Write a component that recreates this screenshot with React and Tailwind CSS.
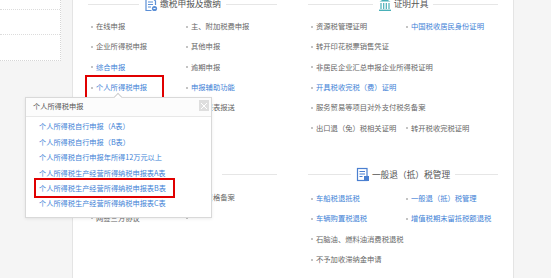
import React from 'react';

const BLUE = 'text-[#3d7fd6]';
const GRAY = 'text-[#666]';

function DocIcon({ color = '#5b8fd6' }) {
  return (
    <svg width="14" height="15" viewBox="0 0 14 15" fill="none">
      <path d="M2 1.5h7l2.5 2.5v4" stroke={color} strokeWidth="1.2" />
      <path d="M2 1.5v12h5.5" stroke={color} strokeWidth="1.2" />
      <path d="M4 5h5M4 7.5h5M4 10h3" stroke={color} strokeWidth="1.1" />
      <circle cx="10.5" cy="11.5" r="2.6" fill={color} />
      <path d="M9.4 11.5h2.2" stroke="#fff" strokeWidth="0.9" />
    </svg>
  );
}

function ColumnsIcon() {
  const c = '#49b0b8';
  return (
    <svg width="14" height="15" viewBox="0 0 14 15" fill="none">
      <path d="M1.5 4.5 7 1.5l5.5 3z" fill={c} />
      <path d="M3 6v6M5.7 6v6M8.3 6v6M11 6v6" stroke={c} strokeWidth="1.2" />
      <path d="M1 13.3h12" stroke={c} strokeWidth="1.4" />
    </svg>
  );
}

function RefundIcon() {
  const c = '#4a7fd0';
  return (
    <svg width="14" height="15" viewBox="0 0 14 15" fill="none">
      <rect x="1.5" y="1.5" width="9.5" height="12" stroke={c} strokeWidth="1.2" />
      <path d="M3.5 4.5h5.5M3.5 7h5.5M3.5 9.5h3" stroke={c} strokeWidth="1.2" />
      <rect x="8" y="9" width="5" height="5" fill={c} />
    </svg>
  );
}

function Header({ icon, title }) {
  return (
    <div className="flex items-center h-[14px] gap-[5px]">
      <div className="flex-1 h-px bg-[#e6e6e6]" />
      <div className="flex items-center gap-[2px]">
        {icon}
        <span className="text-[8.7px] text-[#555] whitespace-nowrap leading-none">{title}</span>
      </div>
      <div className="flex-1 h-px bg-[#e6e6e6]" />
    </div>
  );
}

function Item({ text, blue, wide, children }) {
  return (
    <div className={`relative flex items-center h-[20.33px] pl-[3px] gap-[3px] ${wide ? 'col-span-2' : ''}`}>
      <span className="w-[2px] h-[2px] bg-[#c4c4c4] shrink-0" />
      <span className={`text-[7.3px] whitespace-nowrap leading-none ${blue ? BLUE : GRAY}`}>{text}</span>
      {children}
    </div>
  );
}

function Section({ icon, title, items, top = 'mt-[5.5px]' }) {
  return (
    <div>
      <Header icon={icon} title={title} />
      <div className={`${top} grid grid-cols-[95px_1fr]`}>
        {items.map((it, i) => (
          <Item key={i} text={it.t} blue={it.b} wide={it.w}>
            {it.mark && (
              <div className="absolute left-[-3px] top-[-2.5px] w-[79px] h-[24px] border-2 border-[#e00000]" />
            )}
          </Item>
        ))}
      </div>
    </div>
  );
}

const sec1 = [
  { t: '在线申报' }, { t: '主、附加税费申报' },
  { t: '企业所得税申报' }, { t: '其他申报' },
  { t: '综合申报', b: true }, { t: '逾期申报' },
  { t: '个人所得税申报', b: true, mark: true }, { t: '申报辅助功能', b: true },
  { t: '定期定额申报' }, { t: '财务报表报送' },
  { t: '税费缴纳' }, { t: '' },
];

const sec2 = [
  { t: '资源税管理证明' }, { t: '中国税收居民身份证明', b: true },
  { t: '转开印花税票销售凭证', w: true },
  { t: '非居民企业汇总申报企业所得税证明', w: true },
  { t: '开具税收完税（费）证明', b: true, w: true },
  { t: '服务贸易等项目对外支付税务备案', w: true },
  { t: '出口退（免）税相关证明' }, { t: '转开税收完税证明' },
];

const sec3 = [
  { t: '税种认定' }, { t: '优惠资格备案' },
  { t: '网签三方协议' }, { t: '' },
];

const sec4 = [
  { t: '车船税退抵税', b: true }, { t: '一般退（抵）税管理', b: true },
  { t: '车辆购置税退税', b: true }, { t: '增值税期末留抵税额退税', b: true },
  { t: '石脑油、燃料油消费税退税', w: true },
  { t: '不予加收滞纳金申请', w: true },
];

const popupItems = [
  '个人所得税自行申报（A表）',
  '个人所得税自行申报（B表）',
  '个人所得税自行申报年所得12万元以上',
  '个人所得税生产经营所得纳税申报表A表',
  '个人所得税生产经营所得纳税申报表B表',
  '个人所得税生产经营所得纳税申报表C表',
];

export default function App() {
  return (
    <div className="relative w-[551px] h-[278px] overflow-hidden bg-[#f5f5f5] flex items-start font-['Noto_Sans_CJK_SC','Noto_Sans',sans-serif]">
      {/* left list panel */}
      <div className="w-[61px] h-[61px] shrink-0 bg-white border-r border-b border-dotted border-[#d6d6d6]">
        <div className="h-[10px] border-b border-dotted border-[#dcdcdc]" />
        <div className="h-[25px] border-b border-dotted border-[#dcdcdc]" />
      </div>

      {/* main panel */}
      <div className="ml-[11px] w-[442px] h-[278px] shrink-0 bg-white border-x border-[#e4e4e4] px-[15px]">
        <div className="-mt-[3px] grid grid-cols-[189px_1fr] gap-x-[31px] gap-y-[29.5px]">
          <Section icon={<DocIcon />} title="缴税申报及缴纳" items={sec1} />
          <Section icon={<ColumnsIcon />} title="证明开具" items={sec2} />
          <Section icon={<DocIcon color="#5b8fd6" />} title="税务（登记）" items={sec3} top="mt-[6px]" />
          <Section icon={<RefundIcon />} title="一般退（抵）税管理" items={sec4} top="mt-[6.5px]" />
        </div>
      </div>

      {/* popup */}
      <div className="absolute left-[25px] top-[97px] w-[187px] h-[121px] bg-white border border-[#d9d9d9] shadow-[0_1px_3px_rgba(0,0,0,0.08)]">
        <div className="absolute left-[89px] -top-[4px] w-[6px] h-[6px] rotate-45 bg-white border-l border-t border-[#cfcfcf]" />
        <div className="relative h-[19px] flex items-center pl-[7px] bg-[#fcfcfc] border-b border-[#e8e8e8]">
          <span className="text-[7.2px] text-[#555] leading-none">个人所得税申报</span>
          <div className="absolute right-[2px] top-[2px] w-[10px] h-[11px] bg-[#dedede] flex items-center justify-center">
            <svg width="8" height="8" viewBox="0 0 8 8">
              <path d="M1 1l6 6M7 1 1 7" stroke="#fff" strokeWidth="1" />
            </svg>
          </div>
        </div>
        <div className="pt-[2.3px]">
          {popupItems.map((t, i) => (
            <div key={i} className="relative h-[15.4px] flex items-center pl-[13px]">
              <span className={`text-[7.2px] leading-none whitespace-nowrap ${BLUE}`}>{t}</span>
              {i === 4 && (
                <div className="absolute left-[8px] top-[-2.6px] w-[141px] h-[20px] border-2 border-[#e00000]" />
              )}
            </div>
          ))}
        </div>
      </div>
    </div>
  );
}
